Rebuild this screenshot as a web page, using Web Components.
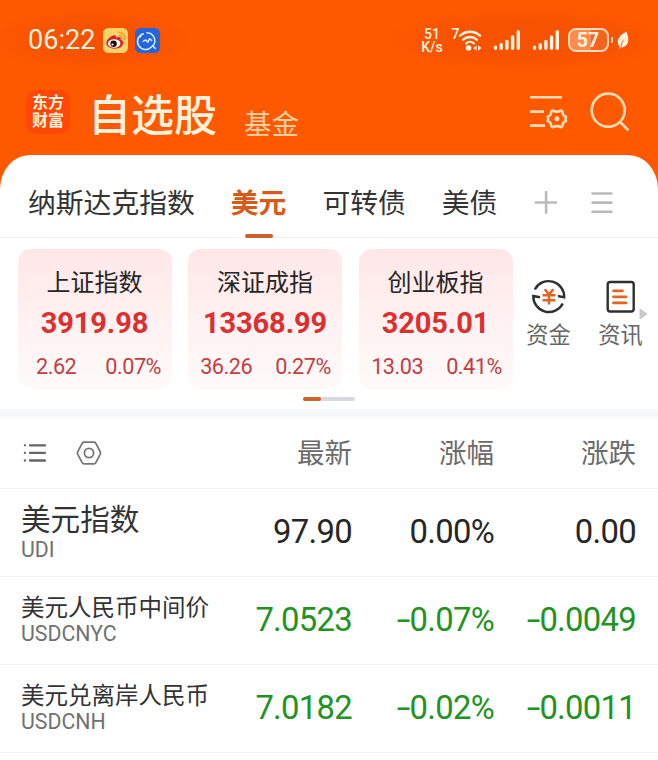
<!DOCTYPE html>
<html lang="zh-CN">
<head>
<meta charset="utf-8">
<meta name="viewport" content="width=device-width, initial-scale=1">
<title>自选股</title>
<style>
  body {
    margin: 0;
    background: #fff;
    overflow: hidden;
    font-family: Roboto, "Noto Sans CJK SC", sans-serif;
  }
</style>
</head>
<body>
<watch-app></watch-app>

<script>
/**
 * Base class: attaches an open shadow root and fills it from render().
 */
class BaseElement extends HTMLElement {
  connectedCallback() {
    if (!this.shadowRoot) this.attachShadow({ mode: 'open' });
    this.shadowRoot.innerHTML = this.render();
  }
}

/** Phone status bar: clock, notification icons, network and battery. */
class StatusBar extends BaseElement {
  render() {
    const bars = `
      <svg width="28" height="24" viewBox="0 0 28 24" stroke="#fff3df" stroke-width="3.4" stroke-linecap="round">
        <path d="M2.5 19.3v1M8.2 16.8v3.5M13.9 13.5v6.8M19.6 9v11.3M25.3 3.6v16.7"/>
      </svg>`;
    return `
      <style>
        :host {
          display: flex;
          align-items: center;
          height: 80px;
          box-sizing: border-box;
          padding: 0 29px 0 28px;
          color: #fff3df;
        }
        svg { display: block; flex: none; }
        .time { font-size: 27px; line-height: 30px; width: 75px; letter-spacing: 0.05px; }
        .blue { margin-left: 7px; }
        .right { display: flex; align-items: center; margin-left: auto; }
        .speed {
          display: flex;
          flex-direction: column;
          align-items: center;
          gap: 1px;
          font-size: 14px;
          font-weight: 500;
          line-height: 12px;
          width: 23px;
        }
        .speed span { height: 12px; }
        .wifi { display: flex; margin-left: 8px; }
        .gen { font-size: 14px; line-height: 13px; font-weight: 500; width: 6px; }
        .sig { margin-left: 11px; }
        .battery {
          box-sizing: border-box;
          width: 41px;
          height: 24px;
          margin-left: 8px;
          border: 2px solid #ffd9b8;
          border-radius: 8px;
          background: linear-gradient(90deg, #ff8a4d 57%, #f5641c 57%);
          font-size: 19.5px;
          font-weight: 700;
          line-height: 21px;
          text-align: center;
        }
        .cap { width: 2.5px; height: 6px; margin: 0 4px 0 2px; border-radius: 2px; background: #ffd9b8; }
      </style>
      <span class="time">06:22</span>
      <svg width="25" height="25" viewBox="0 0 25 25">
        <rect width="25" height="25" rx="5.5" fill="#fdd368"/>
        <path d="M15.5 4.2a6 6 0 0 1 6.2 7.3M16.3 7.2a3.2 3.2 0 0 1 2.7 3.8" fill="none" stroke="#eda12c" stroke-width="1.6" stroke-linecap="round"/>
        <path d="M10 7.6c-3 1-6.7 4.5-6.7 7.5 0 3.5 4 5.6 8.2 5.6 5.2 0 8.8-2.9 8.8-5.7 0-1.8-1.3-2.7-2.7-3.2.7-2-.2-3.8-4.6-2.3.4-2-1-2.5-3-1.9z" fill="#d8232a"/>
        <ellipse cx="11.2" cy="15.5" rx="6.2" ry="4.2" fill="#fff"/>
        <circle cx="10.6" cy="15.7" r="3.2" fill="#16100e"/>
        <circle cx="9.5" cy="16.5" r="1.1" fill="#fff"/>
      </svg>
      <svg class="blue" width="25" height="25" viewBox="0 0 25 25" fill="none" stroke="#d9ecff" stroke-width="1.5" stroke-linecap="round" stroke-linejoin="round">
        <rect width="25" height="25" rx="5.5" fill="#2465dc" stroke="none"/>
        <path d="M8.3 5.8A8 8 0 1 0 16.4 18.900L18 17.700A8 8 0 0 0 12 4.700M6 7.900l-.6.9"/>
        <path d="m17.700 17.700 2.500 2.800"/>
        <path d="m8.200 13.300 2.600-1.400 2 2.200 1.900-3.400 2 1.800"/>
      </svg>
      <div class="right">
        <div class="speed"><span>51</span><span>K/s</span></div>
        <div class="wifi">
          <span class="gen">7</span>
          <svg width="24" height="24" viewBox="0 0 24 24" fill="none" stroke="#fff3df" stroke-width="2.4" stroke-linecap="round">
            <path d="M2 7.700a14.500 14.500 0 0 1 20 0M5.200 11.700a9.800 9.800 0 0 1 13.600 0M8.300 15.400a5.300 5.300 0 0 1 7.400 0"/>
            <circle cx="10.500" cy="20" r="2.800" fill="#fff3df" stroke="none"/>
            <path d="m18.600 17.300-3.300 2.700 3.300 2.700zM20.100 17.300l3.300 2.700-3.300 2.700z" fill="#fff3df" stroke="none"/>
          </svg>
        </div>
        <div class="sig">${bars}</div>
        <div class="sig">${bars}</div>
        <div class="battery">57</div>
        <div class="cap"></div>
        <svg width="12" height="20" viewBox="0 0 12 20">
          <path d="M9.500 1.500C4 4.500.5 8 .8 12.300c.1 2 .8 3.300 2 4.400C4.100 13.200 6 10 8 7.700 6 11 4.800 14 4.300 17.500c4.200-.5 7-3.500 7-7.800 0-3-.8-5.700-1.800-8.200z" fill="#fff3df"/>
          <path d="M2.300 18.500 4 14.500" stroke="#fff3df" stroke-width="1.2"/>
        </svg>
      </div>`;
  }
}

/** Brand logo, page titles and the header actions. */
class TitleBar extends BaseElement {
  render() {
    return `
      <style>
        :host {
          display: flex;
          align-items: flex-start;
          height: 75px;
          box-sizing: border-box;
          padding: 0 28px 0 26px;
          color: #fff1dc;
        }
        .logo {
          width: 44px;
          height: 44px;
          margin-top: 10px;
          border-radius: 10px;
          background: #ff4708;
          font-size: 16px;
          font-weight: 700;
          line-height: 18px;
          text-align: center;
          box-sizing: border-box;
          padding-top: 4px;
        }
        .logo span { display: block; }
        .main { width: 129px; margin: 10px 0 0 18px; font-size: 43px; font-weight: 500; line-height: 52px; }
        .sub { margin: 28px 0 0 27px; font-size: 27.5px; line-height: 34px; color: #ffd0a4; }
        .tools { display: flex; margin: 11px 0 0 auto; gap: 21px; }
      </style>
      <div class="logo"><span>东方</span><span>财富</span></div>
      <div class="main">自选股</div>
      <div class="sub">基金</div>
      <div class="tools">
        <svg width="39" height="42" viewBox="0 0 39 42" fill="none" stroke="#ffdcb8" stroke-width="2.6">
          <path d="M0 6.300h32M0 20.600h14M0 34.600h15"/>
          <path d="M22.600 19.500Q26.800 21.800 31 19.500Q32.800 20 32.700 22.500Q33 24.500 36 25.800Q35 28 36 30Q33 31.200 32.700 33.300Q32.800 35.600 31 36.200Q26.800 34 22.600 36.200Q20.900 35.600 20.900 33.300Q20.600 31.200 17.700 30Q18.700 28 17.700 25.800Q20.600 24.500 20.900 22.500Q20.900 20 22.600 19.500Z" stroke-linejoin="round"/>
          <circle cx="26.900" cy="27.800" r="2.500" fill="#ffdcb8" stroke="none"/>
        </svg>
        <svg width="40" height="42" viewBox="0 0 40 42" fill="none" stroke="#ffdcb8" stroke-width="2.7">
          <circle cx="18.200" cy="19.200" r="16.500"/>
          <path d="m29.800 30.700 8.500 8.500"/>
        </svg>
      </div>`;
  }
}

/** One watch list tab; "active" marks the selected one. */
class TabItem extends BaseElement {
  render() {
    return `
      <style>
        :host {
          display: flex;
          flex-direction: column;
          align-items: center;
          height: 83px;
          box-sizing: border-box;
          padding-top: 30px;
          font-size: 27.8px;
          line-height: 38px;
          color: #333;
          white-space: nowrap;
        }
        :host([active]) { color: #d85a18; font-weight: 700; }
        :host([active])::after {
          content: "";
          width: 28px;
          height: 3.5px;
          margin-top: 11px;
          border-radius: 2px;
          background: #cc6029;
        }
      </style>
      <slot></slot>`;
  }
}

class TabStrip extends BaseElement {
  render() {
    return `
      <style>
        :host {
          display: flex;
          height: 83px;
          box-sizing: border-box;
          padding-left: 28px;
          gap: 36px;
          border-bottom: 1.5px solid #f1f1f1;
        }
        .icons { display: flex; gap: 34px; margin: 36px 0 0 1px; }
        svg { display: block; }
      </style>
      <tab-item>纳斯达克指数</tab-item>
      <tab-item active>美元</tab-item>
      <tab-item>可转债</tab-item>
      <tab-item>美债</tab-item>
      <div class="icons">
        <svg width="23" height="24" viewBox="0 0 23 24" stroke="#bababa" stroke-width="2.6" stroke-linecap="round"><path d="M1.800 11.500h20.800M12.100 1v20.800"/></svg>
        <svg width="22" height="24" viewBox="0 0 22 24" stroke="#bababa" stroke-width="2.6" stroke-linecap="round"><path d="M1.500 2.500h19M1.500 11.600h19M1.500 20.700h19"/></svg>
      </div>`;
  }
}

/** Market index card. */
class IndexCard extends BaseElement {
  render() {
    return `
      <style>
        :host {
          display: block;
          width: 154px;
          height: 140px;
          box-sizing: border-box;
          border-radius: 13px;
          background: linear-gradient(#ffe7e8, #fff1f1 50%, #fffafa);
          text-align: center;
        }
        .name { padding-top: 17px; font-size: 24px; line-height: 34px; color: #252525; }
        .value { margin-top: 7px; font-size: 29px; font-weight: 700; line-height: 32px; color: #d93030; letter-spacing: -0.1px; }
        .change {
          display: flex;
          justify-content: center;
          gap: ${this.getAttribute('gap')}px;
          margin-top: 15px;
          padding-left: ${this.getAttribute('shift') || 0}px;
          font-size: 21.7px;
          line-height: 26px;
          letter-spacing: -0.5px;
          color: #c04042;
        }
      </style>
      <div class="name">${this.getAttribute('name')}</div>
      <div class="value">${this.getAttribute('value')}</div>
      <div class="change"><span>${this.getAttribute('diff')}</span><span>${this.getAttribute('rate')}</span></div>`;
  }
}

/** Icon with a caption below it. */
class QuickLink extends BaseElement {
  render() {
    return `
      <style>
        :host {
          display: flex;
          flex-direction: column;
          align-items: center;
          width: 44px;
          font-size: 22.2px;
          line-height: 30px;
          color: #666;
          white-space: nowrap;
        }
        .label { margin-top: 5px; }
      </style>
      <slot name="icon"></slot>
      <span class="label"><slot></slot></span>`;
  }
}

class IndexStrip extends BaseElement {
  render() {
    return `
      <style>
        :host {
          display: block;
          height: 171px;
          box-sizing: border-box;
          padding-top: 11px;
          position: relative;
        }
        .row { display: flex; padding-left: 17.5px; gap: 16.5px; }
        .links { display: flex; gap: 28px; margin: 28px 0 0 -2.5px; }
        svg { display: block; }
        .more { position: absolute; left: 639px; top: 70px; }
        .pager { width: 52px; height: 3.5px; margin: 8px 0 0 303px; border-radius: 2px; background: #d8d8de; }
        .pager i { display: block; width: 18px; height: 100%; border-radius: 2px; background: #cf642c; }
      </style>
      <div class="row">
        <index-card name="上证指数" value="3919.98" diff="2.62" rate="0.07%" gap="29" shift="8"></index-card>
        <index-card name="深证成指" value="13368.99" diff="36.26" rate="0.27%" gap="23" shift="1"></index-card>
        <index-card name="创业板指" value="3205.01" diff="13.03" rate="0.41%" gap="23" shift="2"></index-card>
        <div class="links">
          <quick-link>
            <svg slot="icon" width="38" height="38" viewBox="0 0 38 38" fill="none" stroke="#2f2f2f" stroke-width="2.4">
              <path d="M4.800 12.500A15.600 15.600 0 0 1 34.200 20.300L28 19"/>
              <path d="M10 20.300 3.300 19A15.600 15.600 0 0 0 32.800 26.500"/>
              <g stroke="#e5641e" stroke-width="2.6"><path d="m14.700 12.200 4.300 5.300 4.300-5.300M12.500 18.300h13M12.500 23.200h13M19 17.500v10"/></g>
            </svg>资金
          </quick-link>
          <quick-link>
            <svg slot="icon" width="38" height="38" viewBox="0 0 38 38" fill="none" stroke="#2f2f2f" stroke-width="2.4">
              <rect x="5.700" y="5" width="26" height="29.500" rx="2.500"/>
              <path d="M11.500 13.800h9M11.500 19.800h12.500M11.500 25.800h12.500" stroke="#e5641e" stroke-width="2.800" stroke-linecap="round"/>
            </svg>资讯
          </quick-link>
        </div>
      </div>
      <svg class="more" width="9" height="12" viewBox="0 0 9 12"><path d="M1 1v10l7-5z" fill="#c8c8c8" stroke="#c8c8c8" stroke-linejoin="round"/></svg>
      <div class="pager"><i></i></div>`;
  }
}

/** One instrument in the quote table. */
class QuoteRow extends BaseElement {
  /** Widens the minus sign, which is narrow in Roboto. */
  format(value) {
    return value.replace('-', '<span class="minus">-</span>');
  }

  render() {
    const large = this.hasAttribute('large');
    const values = this.getAttribute('values').split(' ');
    return `
      <style>
        :host {
          display: grid;
          grid-template-columns: 209px 122px 142px 142px;
          height: 88px;
          box-sizing: border-box;
          padding-left: 21px;
          border-bottom: 1px solid #f5f5f5;
        }
        .name {
          padding-top: ${large ? 11 : 15}px;
          font-size: ${large ? 29.6 : 23.5}px;
          line-height: ${large ? 40 : 32}px;
          color: #333;
          white-space: nowrap;
        }
        .code { margin-top: ${large ? -1 : -1}px; font-size: 21.3px; line-height: 22px; letter-spacing: 0; color: #717171; }
        .num {
          font-size: 32.8px;
          line-height: 86px;
          letter-spacing: -0.7px;
          text-align: right;
          white-space: nowrap;
          color: ${values[1].startsWith('-') ? '#219321' : '#262626'};
        }
        .minus { display: inline-block; transform: scaleX(1.5); transform-origin: right; }
      </style>
      <div>
        <div class="name">${this.getAttribute('name')}</div>
        <div class="code">${this.getAttribute('code')}</div>
      </div>
      ${values.map(v => `<span class="num">${this.format(v)}</span>`).join('')}`;
  }
}

class QuoteTable extends BaseElement {
  render() {
    return `
      <style>
        :host { display: block; border-top: 9px solid #f6f7f9; }
        .head {
          display: grid;
          grid-template-columns: 208px 122px 142px 142px;
          height: 71px;
          box-sizing: border-box;
          padding-left: 22px;
          border-bottom: 1px solid #f5f5f5;
          font-size: 27.5px;
          line-height: 71px;
          text-align: right;
          color: #6b6b6b;
        }
        .tools { display: flex; gap: 29.5px; padding: 22px 0 0 0; }
        svg { display: block; }
      </style>
      <div class="head">
        <div class="tools">
          <svg width="24" height="26" viewBox="0 0 24 26" stroke="#666" stroke-width="2.3" stroke-linecap="round"><path d="M2.900 5.300h.1M2.900 12.900h.1M2.900 20.500h.1M8 5.300h15M8 12.900h15M8 20.500h15"/></svg>
          <svg width="26" height="26" viewBox="0 0 26 26" fill="none" stroke="#777" stroke-width="1.8" stroke-linejoin="round">
            <path d="M8 2.200h10q1.100 0 1.700 1l4.500 8.500q.6 1.300 0 2.600l-4.500 8.500q-.6 1-1.700 1H8q-1.100 0-1.700-1l-4.500-8.500q-.6-1.300 0-2.600l4.500-8.500q.6-1 1.700-1z"/>
            <circle cx="13" cy="13" r="4.600"/>
          </svg>
        </div>
        <span>最新</span><span>涨幅</span><span>涨跌</span>
      </div>
      <quote-row large name="美元指数" code="UDI" values="97.90 0.00% 0.00"></quote-row>
      <quote-row name="美元人民币中间价" code="USDCNYC" values="7.0523 -0.07% -0.0049"></quote-row>
      <quote-row name="美元兑离岸人民币" code="USDCNH" values="7.0182 -0.02% -0.0011"></quote-row>`;
  }
}

/** Page shell: orange header with the white sheet over it. */
class WatchApp extends BaseElement {
  render() {
    return `
      <style>
        :host { display: block; width: 658px; height: 760px; overflow: hidden; background: #ff5900; }
        .sheet { height: 605px; border-radius: 30px 30px 0 0 / 34px 34px 0 0; background: #fff; }
        status-bar {
          background:
            radial-gradient(110px 34px at 90px 40px, #f75200 40%, transparent),
            radial-gradient(150px 34px at 525px 40px, #f75200 50%, transparent);
        }
      </style>
      <status-bar></status-bar>
      <title-bar></title-bar>
      <div class="sheet">
        <tab-strip></tab-strip>
        <index-strip></index-strip>
        <quote-table></quote-table>
      </div>`;
  }
}

customElements.define('status-bar', StatusBar);
customElements.define('title-bar', TitleBar);
customElements.define('tab-item', TabItem);
customElements.define('tab-strip', TabStrip);
customElements.define('index-card', IndexCard);
customElements.define('quick-link', QuickLink);
customElements.define('index-strip', IndexStrip);
customElements.define('quote-row', QuoteRow);
customElements.define('quote-table', QuoteTable);
customElements.define('watch-app', WatchApp);
</script>
</body>
</html>
